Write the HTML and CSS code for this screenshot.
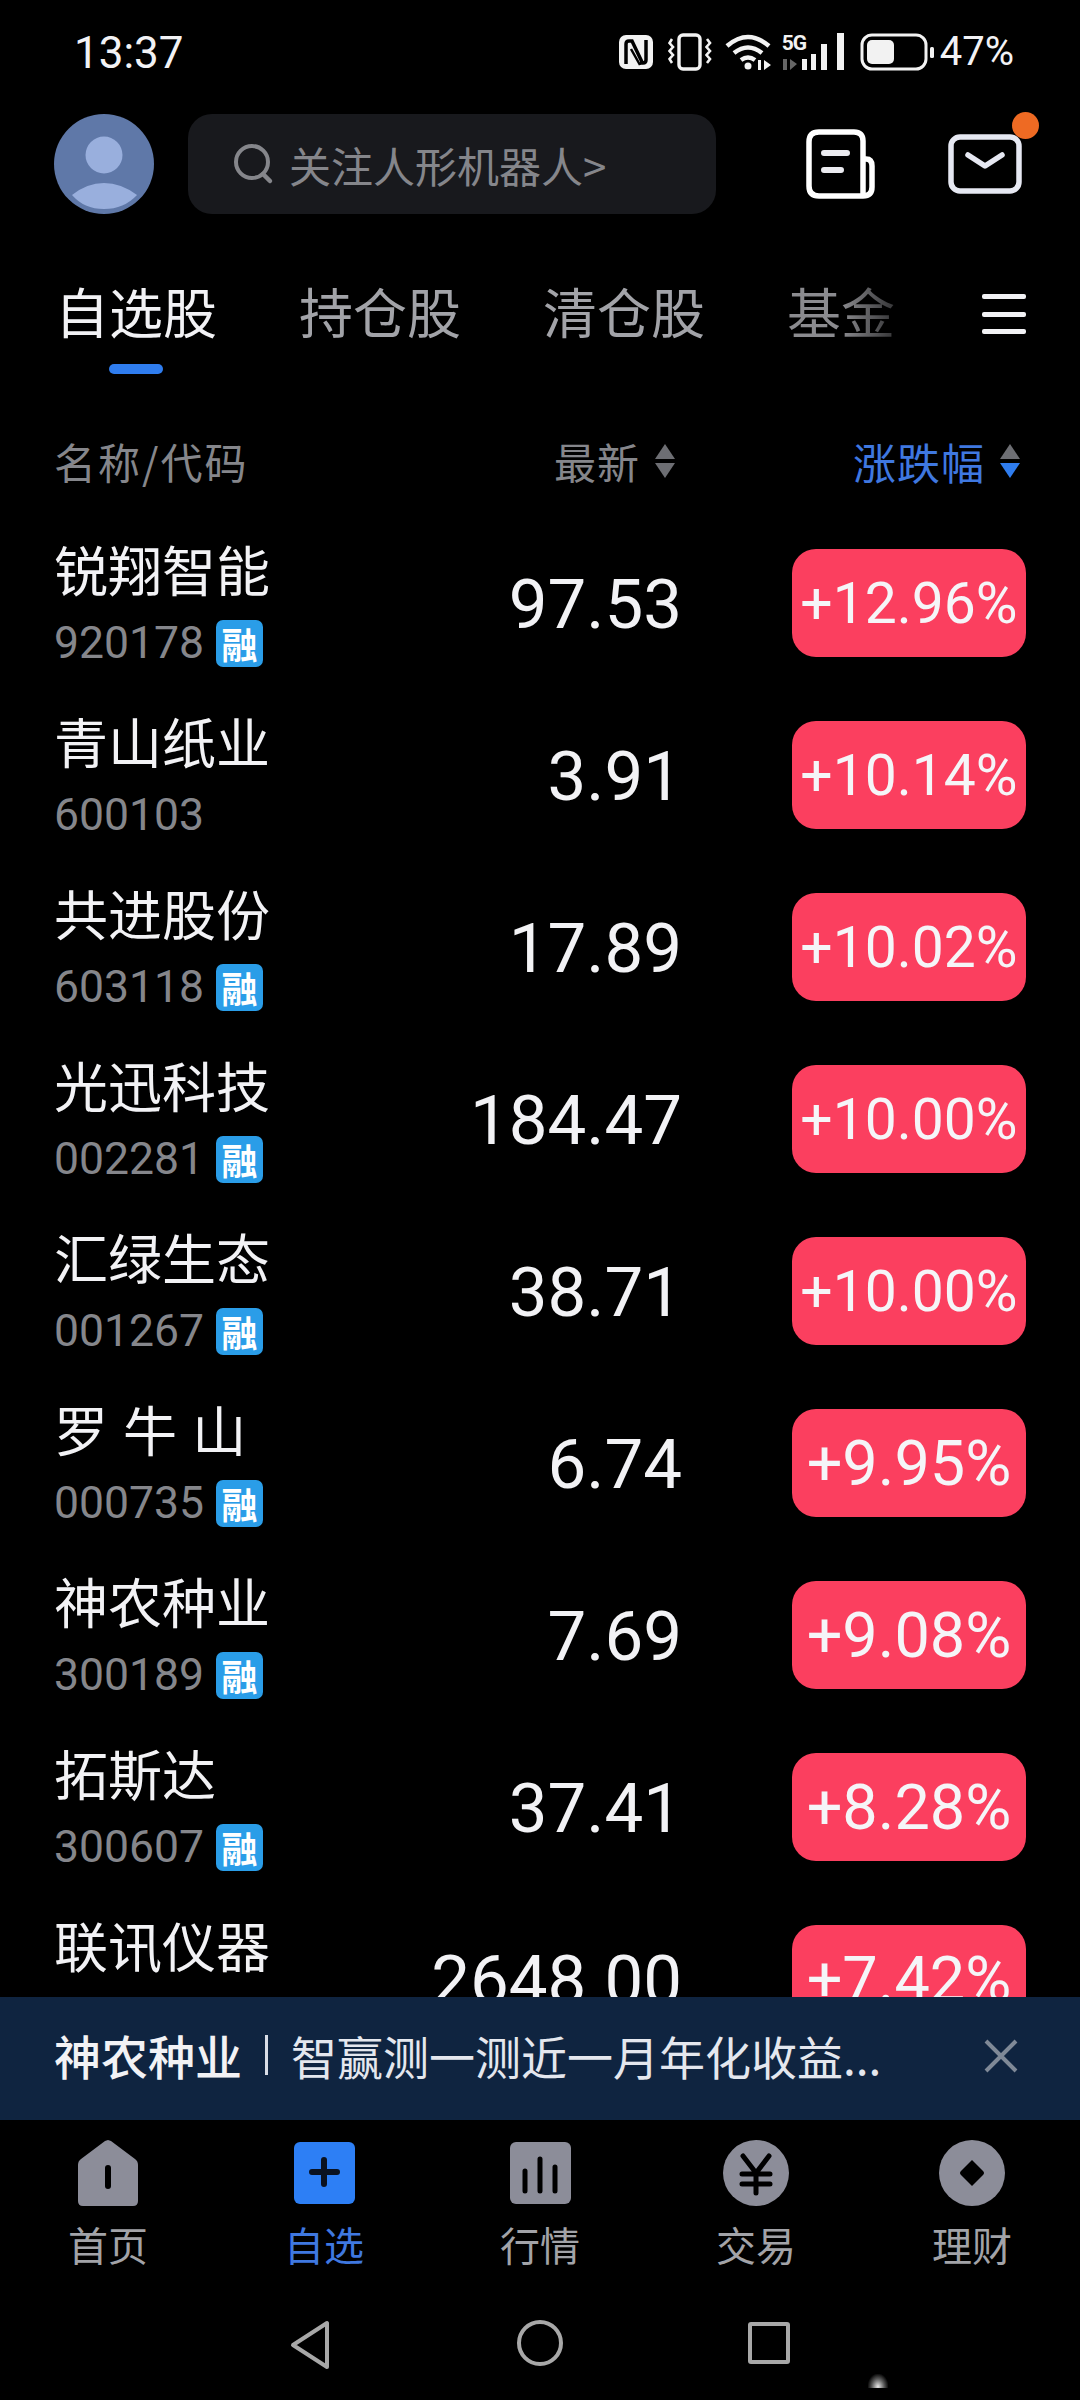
FILE: index.html
```html
<!DOCTYPE html>
<html lang="zh-CN">

<head>
    <meta charset="UTF-8">
    <meta name="viewport" content="width=device-width, initial-scale=1.0">
    <link rel="stylesheet" href="styles.css">
    <title>自选股</title>
</head>

<body>
    <div class="screen">
        <!-- status bar -->
        <div class="status">
            <span class="time">13:37</span>
            <div class="status_icons">
                <svg class="ic_nfc" viewBox="0 0 34 34">
                    <rect width="34" height="34" rx="7" fill="#f2f2f2"/>
                    <path d="M7 29V9q0-3 3-3h3l10 21M27 5v20q0 3-3 3h-3" fill="none" stroke="#000" stroke-width="3.500"/>
                    <path d="M12 14l9 16" fill="none" stroke="#000" stroke-width="2.500"/>
                </svg>
                <svg class="ic_vib" viewBox="0 0 44 38">
                    <rect x="11" y="2" width="21" height="34" rx="4" fill="none" stroke="#f2f2f2" stroke-width="3.400"/>
                    <path d="M4 6l-2.500 4 3.500 4-3.500 4 3.500 4-3.500 4 2.500 4M39 6l3 4-3.500 4 3.500 4-3.500 4 3.500 4-3 4" fill="none" stroke="#f2f2f2" stroke-width="2.600"/>
                </svg>
                <svg class="ic_wifi" viewBox="0 0 48 38">
                    <path d="M2 13Q23-5 44 13M9 20q14-11 28 0M16 27q7-5 14 0" fill="none" stroke="#f2f2f2" stroke-width="4.500"/>
                    <circle cx="23" cy="33" r="3.500" fill="#f2f2f2"/>
                    <path d="M33 27h3v10h-3zM39 27l7 5-7 5z" fill="#f2f2f2"/>
                </svg>
                <div class="signal">
                    <span class="signal_5g">5G</span>
                    <svg class="ic_signal" viewBox="0 0 64 38">
                        <path d="M1 26h4v11H1zM8 26l7 5-7 6z" fill="#666"/>
                        <path d="M20 26h5v11h-5zM29 21h5v16h-5zM39 11h6v26h-6zM55 0h7v37h-7z" fill="#f2f2f2"/>
                    </svg>
                </div>
                <svg class="ic_batt" viewBox="0 0 74 38">
                    <rect x="2" y="2" width="64" height="34" rx="10" fill="none" stroke="#f2f2f2" stroke-width="3"/>
                    <rect x="7" y="7" width="27" height="24" rx="5" fill="#f2f2f2"/>
                    <rect x="70" y="14" width="4" height="11" rx="1.500" fill="#f2f2f2"/>
                </svg>
                <span class="pct">47%</span>
            </div>
        </div>

        <!-- top bar -->
        <div class="topbar">
            <svg class="avatar" viewBox="0 0 100 100">
                <circle cx="50" cy="50" r="50" fill="#5f78a8"/>
                <circle cx="50" cy="41" r="18.500" fill="#99afdd"/>
                <path d="M18 81Q33 69 50 69T83 81Q70 95 50 95T18 81z" fill="#99afdd"/>
            </svg>
            <div class="search">
                <svg class="ic_search" viewBox="0 0 42 42">
                    <circle cx="19" cy="19" r="16" fill="none" stroke="#85868b" stroke-width="4"/>
                    <path d="M30 31l7 7" stroke="#85868b" stroke-width="4.500" stroke-linecap="round"/>
                </svg>
                <span class="search_txt">关注人形机器人&gt;</span>
            </div>
            <svg class="ic_book" viewBox="0 0 70 72">
                <path d="M58 66V13q0-9-9-9H14Q4 4 4 14v44q0 10 10 10h44q9 0 9-9V38q0-7-6-7h-3" fill="none" stroke="#fff" stroke-width="5.500"/>
                <path d="M19 25h23M19 42h17" stroke="#ebebf0" stroke-width="6" stroke-linecap="round"/>
            </svg>
            <div class="mail_box">
                <svg class="ic_mail" viewBox="0 0 74 60">
                    <rect x="3" y="3" width="68" height="54" rx="9" fill="none" stroke="#e6e8f2" stroke-width="5.500"/>
                    <path d="M20 21l17 11 17-11" fill="none" stroke="#e6e8f2" stroke-width="5.500" stroke-linecap="round" stroke-linejoin="round"/>
                </svg>
                <span class="mail_dot"></span>
            </div>
        </div>

        <!-- tabs -->
        <div class="tabs">
            <div class="tab tab_on">自选股<i class="tab_line"></i></div>
            <div class="tab">持仓股</div>
            <div class="tab">清仓股</div>
            <div class="tab tab_fade">基金</div>
            <div class="menu"><i></i><i></i><i></i></div>
        </div>

        <!-- list header -->
        <div class="list_head">
            <span class="head_name">名称/代码</span>
            <span class="head_col head_price">最新
                <span class="sort"><i class="up"></i><i class="down"></i></span>
            </span>
            <span class="head_col head_chg">涨跌幅
                <span class="sort"><i class="up"></i><i class="down on"></i></span>
            </span>
        </div>

        <div class="list">
            <div class="row">
                <div class="stock"><b class="name">锐翔智能</b><div class="code">920178<span class="rong">融</span></div></div>
                <div class="price">97.53</div>
                <div class="chg"><span>+12.96%</span></div>
            </div>
            <div class="row">
                <div class="stock"><b class="name">青山纸业</b><div class="code">600103</div></div>
                <div class="price">3.91</div>
                <div class="chg"><span>+10.14%</span></div>
            </div>
            <div class="row">
                <div class="stock"><b class="name">共进股份</b><div class="code">603118<span class="rong">融</span></div></div>
                <div class="price">17.89</div>
                <div class="chg"><span>+10.02%</span></div>
            </div>
            <div class="row">
                <div class="stock"><b class="name">光迅科技</b><div class="code">002281<span class="rong">融</span></div></div>
                <div class="price">184.47</div>
                <div class="chg"><span>+10.00%</span></div>
            </div>
            <div class="row">
                <div class="stock"><b class="name">汇绿生态</b><div class="code">001267<span class="rong">融</span></div></div>
                <div class="price">38.71</div>
                <div class="chg"><span>+10.00%</span></div>
            </div>
            <div class="row">
                <div class="stock"><b class="name name_gap">罗 牛 山</b><div class="code">000735<span class="rong">融</span></div></div>
                <div class="price">6.74</div>
                <div class="chg chg_short"><span>+9.95%</span></div>
            </div>
            <div class="row">
                <div class="stock"><b class="name">神农种业</b><div class="code">300189<span class="rong">融</span></div></div>
                <div class="price">7.69</div>
                <div class="chg chg_short"><span>+9.08%</span></div>
            </div>
            <div class="row">
                <div class="stock"><b class="name">拓斯达</b><div class="code">300607<span class="rong">融</span></div></div>
                <div class="price">37.41</div>
                <div class="chg chg_short"><span>+8.28%</span></div>
            </div>
            <div class="row">
                <div class="stock"><b class="name">联讯仪器</b><div class="code"></div></div>
                <div class="price">2648.00</div>
                <div class="chg chg_short"><span>+7.42%</span></div>
            </div>
        </div>

        <!-- banner -->
        <div class="banner">
            <b class="banner_name">神农种业</b>
            <span class="banner_bar"></span>
            <span class="banner_txt">智赢测一测近一月年化收益...</span>
            <svg class="ic_close" viewBox="0 0 36 36">
                <path d="M3 3l30 30M33 3L3 33" stroke="#7f8997" stroke-width="4"/>
            </svg>
        </div>

        <!-- bottom nav -->
        <div class="nav">
            <div class="nav_item">
                <svg class="nav_ic" viewBox="0 0 68 68">
                    <path d="M34 1l-3 1L7 20q-3 2-3 6v36q0 5 5 5h50q5 0 5-5V26q0-4-3-6L37 2z" fill="#8c8d99"/>
                    <path d="M34 29v18" stroke="#000" stroke-width="6" stroke-linecap="round"/>
                </svg>
                <span>首页</span>
            </div>
            <div class="nav_item nav_on">
                <svg class="nav_ic" viewBox="0 0 68 68">
                    <rect x="4" y="3" width="61" height="62" rx="6" fill="#2d7ff5"/>
                    <path d="M34 21v24M22 33h25" stroke="#0a1220" stroke-width="6" stroke-linecap="round"/>
                </svg>
                <span>自选</span>
            </div>
            <div class="nav_item">
                <svg class="nav_ic" viewBox="0 0 68 68">
                    <rect x="4" y="3" width="61" height="62" rx="6" fill="#8c8d99"/>
                    <path d="M19 32v20M34 20v32M49 28v24" stroke="#000" stroke-width="5" stroke-linecap="round"/>
                </svg>
                <span>行情</span>
            </div>
            <div class="nav_item">
                <svg class="nav_ic" viewBox="0 0 68 68">
                    <circle cx="34" cy="34" r="33" fill="#8c8d99"/>
                    <path d="M21 17l13 17 13-17M20 35h28M20 45h28M34 34v20" fill="none" stroke="#000" stroke-width="5" stroke-linecap="round"/>
                </svg>
                <span>交易</span>
            </div>
            <div class="nav_item">
                <svg class="nav_ic" viewBox="0 0 68 68">
                    <circle cx="34" cy="34" r="33" fill="#8c8d99"/>
                    <path d="M34 21l11 11q2 2 0 4L34 47 23 36q-2-2 0-4z" fill="#000"/>
                </svg>
                <span>理财</span>
            </div>
        </div>

        <!-- system buttons -->
        <div class="sysnav">
            <svg class="sys_back" viewBox="0 0 44 50">
                <path d="M38 3v44L4 25z" fill="none" stroke="#a8a8a8" stroke-width="4" stroke-linejoin="round"/>
            </svg>
            <span class="sys_home"></span>
            <span class="sys_recent"></span>
            <span class="mark"></span>
        </div>
    </div>
</body>

</html>
```

FILE: styles.css
```css
* {
    box-sizing: border-box;
}

body {
    margin: 0;
    background-color: #000;
    color: #f2f2f5;
    font-family: "Noto Sans CJK SC", Roboto, sans-serif;
}

i {
    display: block;
}

svg {
    display: block;
    flex: none;
}

.screen {
    width: 1080px;
    height: 2400px;
    display: flex;
    flex-direction: column;
    overflow: hidden;
}

/* status bar */
.status {
    height: 114px;
    padding: 30px 66px 0 74px;
    display: flex;
    justify-content: space-between;
    align-items: flex-start;
    font-family: Roboto, sans-serif;
}

.time {
    font-size: 44px;
    line-height: 44px;
    margin-top: 1px;
}

.status_icons {
    display: flex;
    align-items: center;
    height: 44px;
}

.ic_nfc {
    width: 34px;
    height: 34px;
}

.ic_vib {
    width: 44px;
    height: 38px;
    margin-left: 15px;
}

.ic_wifi {
    width: 48px;
    height: 38px;
    margin-left: 13px;
}

.signal {
    position: relative;
    margin-left: 9px;
    width: 64px;
    height: 38px;
}

.signal_5g {
    position: absolute;
    left: 0;
    top: 0;
    font-size: 21px;
    line-height: 20px;
    font-weight: 700;
    letter-spacing: -1px;
    color: #f2f2f2;
}

.ic_signal {
    width: 64px;
    height: 38px;
}

.ic_batt {
    width: 74px;
    height: 38px;
    margin-left: 14px;
}

.pct {
    font-size: 40px;
    line-height: 44px;
    margin-left: 6px;
}

/* top bar */
.topbar {
    height: 100px;
    padding-left: 54px;
    display: flex;
    align-items: center;
}

.avatar {
    width: 100px;
    height: 100px;
}

.search {
    width: 528px;
    height: 100px;
    margin-left: 34px;
    padding-left: 45px;
    border-radius: 24px;
    background-color: #18191d;
    display: flex;
    align-items: center;
}

.ic_search {
    width: 42px;
    height: 42px;
}

.search_txt {
    margin-left: 14px;
    font-size: 42px;
    color: #85868b;
}

.ic_book {
    width: 70px;
    height: 72px;
    margin-left: 89px;
}

.mail_box {
    position: relative;
    width: 74px;
    height: 60px;
    margin-left: 73px;
}

.ic_mail {
    width: 74px;
    height: 60px;
}

.mail_dot {
    position: absolute;
    right: -17px;
    top: -22px;
    width: 27px;
    height: 27px;
    border-radius: 50%;
    background-color: #ee6a23;
}

/* tabs */
.tabs {
    height: 160px;
    padding: 62px 0 0 55px;
    display: flex;
    align-items: flex-start;
    gap: 82px;
}

.tab {
    position: relative;
    font-size: 54px;
    line-height: 70px;
    color: #a2a3a8;
    white-space: nowrap;
}

.tab_on {
    color: #f2f2f5;
}

.tab_fade {
    width: 108px;
    background: linear-gradient(90deg, #8b8b8f 50%, #3c3c3e 95%);
    background-clip: text;
    -webkit-background-clip: text;
    color: transparent;
}

.tab_line {
    position: absolute;
    left: 54px;
    top: 88px;
    width: 54px;
    height: 10px;
    border-radius: 5px;
    background-color: #2f7def;
}

.menu {
    margin: 18px 0 0 5px;
    width: 44px;
    height: 40px;
    display: flex;
    flex-direction: column;
    justify-content: space-between;
}

.menu i {
    height: 5px;
    border-radius: 2px;
    background-color: #f2f2f5;
}

/* list header */
.list_head {
    height: 143px;
    padding: 59px 60px 0 54px;
    display: flex;
    align-items: flex-start;
    font-size: 42px;
    line-height: 56px;
    color: #85868b;
}

.head_name {
    width: 500px;
    letter-spacing: 2px;
}

.head_col {
    display: flex;
    align-items: center;
    gap: 15px;
    letter-spacing: 1px;
}

.head_chg {
    margin-left: auto;
    font-size: 43px;
    color: #3f78e0;
}

.sort {
    display: flex;
    flex-direction: column;
    gap: 4px;
}

.sort i {
    width: 0;
    height: 0;
    border-left: 10px solid transparent;
    border-right: 10px solid transparent;
}

.sort .up {
    border-bottom: 15px solid #6d6e73;
}

.sort .down {
    border-top: 15px solid #6d6e73;
}

.sort .down.on {
    border-top-color: #2f7def;
}

/* stock rows */
.list {
    flex: 1;
    min-height: 0;
    overflow: hidden;
}

.row {
    height: 172px;
    padding-left: 54px;
    display: flex;
    align-items: center;
}

.stock {
    width: 300px;
    align-self: flex-start;
    padding-top: 18px;
}

.name {
    display: block;
    font-size: 54px;
    font-weight: 400;
    line-height: 68px;
    white-space: nowrap;
}

.name_gap {
    word-spacing: 3px;
}

.code {
    display: flex;
    align-items: center;
    height: 64px;
    margin-top: 8px;
    font-family: Roboto, sans-serif;
    font-size: 44.500px;
    color: #85868b;
}

.rong {
    width: 47px;
    height: 47px;
    margin-left: 12px;
    border-radius: 7px;
    background-color: #2a9de8;
    color: #fff;
    font-family: "Noto Sans CJK SC", sans-serif;
    font-size: 36px;
    font-weight: 700;
    line-height: 47px;
    text-align: center;
}

.price {
    width: 328px;
    padding-top: 2px;
    text-align: right;
    font-family: Roboto, sans-serif;
    font-size: 69px;
    color: #f2f2f5;
}

.chg {
    width: 234px;
    height: 108px;
    margin-left: 110px;
    border-radius: 24px;
    background-color: #fb3f5f;
    display: flex;
    align-items: center;
    justify-content: center;
    font-family: Roboto, sans-serif;
    font-size: 57px;
    color: #f5f5f8;
}

.chg_short {
    font-size: 63px;
}

/* banner */
.banner {
    height: 123px;
    flex: none;
    padding: 0 0 8px 54px;
    background-color: #0f2440;
    display: flex;
    align-items: center;
}

.banner_name {
    font-size: 47px;
    font-weight: 500;
}

.banner_bar {
    width: 3px;
    height: 40px;
    margin: 0 23px;
    background-color: #d8dde6;
}

.banner_txt {
    width: 690px;
    font-size: 46px;
    color: #e4e7ee;
    white-space: nowrap;
}

.ic_close {
    width: 36px;
    height: 36px;
    margin: 2px 0 0 2px;
}

/* bottom nav */
.nav {
    height: 170px;
    flex: none;
    padding-top: 19px;
    display: flex;
}

.nav_item {
    width: 216px;
    display: flex;
    flex-direction: column;
    align-items: center;
    font-size: 40px;
    line-height: 56px;
    color: #a2a3a8;
}

.nav_ic {
    width: 68px;
    height: 68px;
    margin-bottom: 9px;
}

.nav_on {
    color: #3f78e0;
}

/* system buttons */
.sysnav {
    position: relative;
    height: 110px;
    flex: none;
    padding: 30px 0 0 289px;
    display: flex;
    align-items: flex-start;
}

.sys_back {
    width: 44px;
    height: 50px;
}

.sys_home {
    width: 46px;
    height: 46px;
    margin-left: 184px;
    border: 4px solid #a8a8a8;
    border-radius: 50%;
}

.sys_recent {
    width: 42px;
    height: 42px;
    margin: 2px 0 0 185px;
    border: 4px solid #a8a8a8;
    border-radius: 3px;
}

.mark {
    position: absolute;
    left: 868px;
    top: 84px;
    width: 20px;
    height: 14px;
    background: radial-gradient(ellipse at 50% 90%, #e8e8e8 0, #555 45%, transparent 75%);
}
```
